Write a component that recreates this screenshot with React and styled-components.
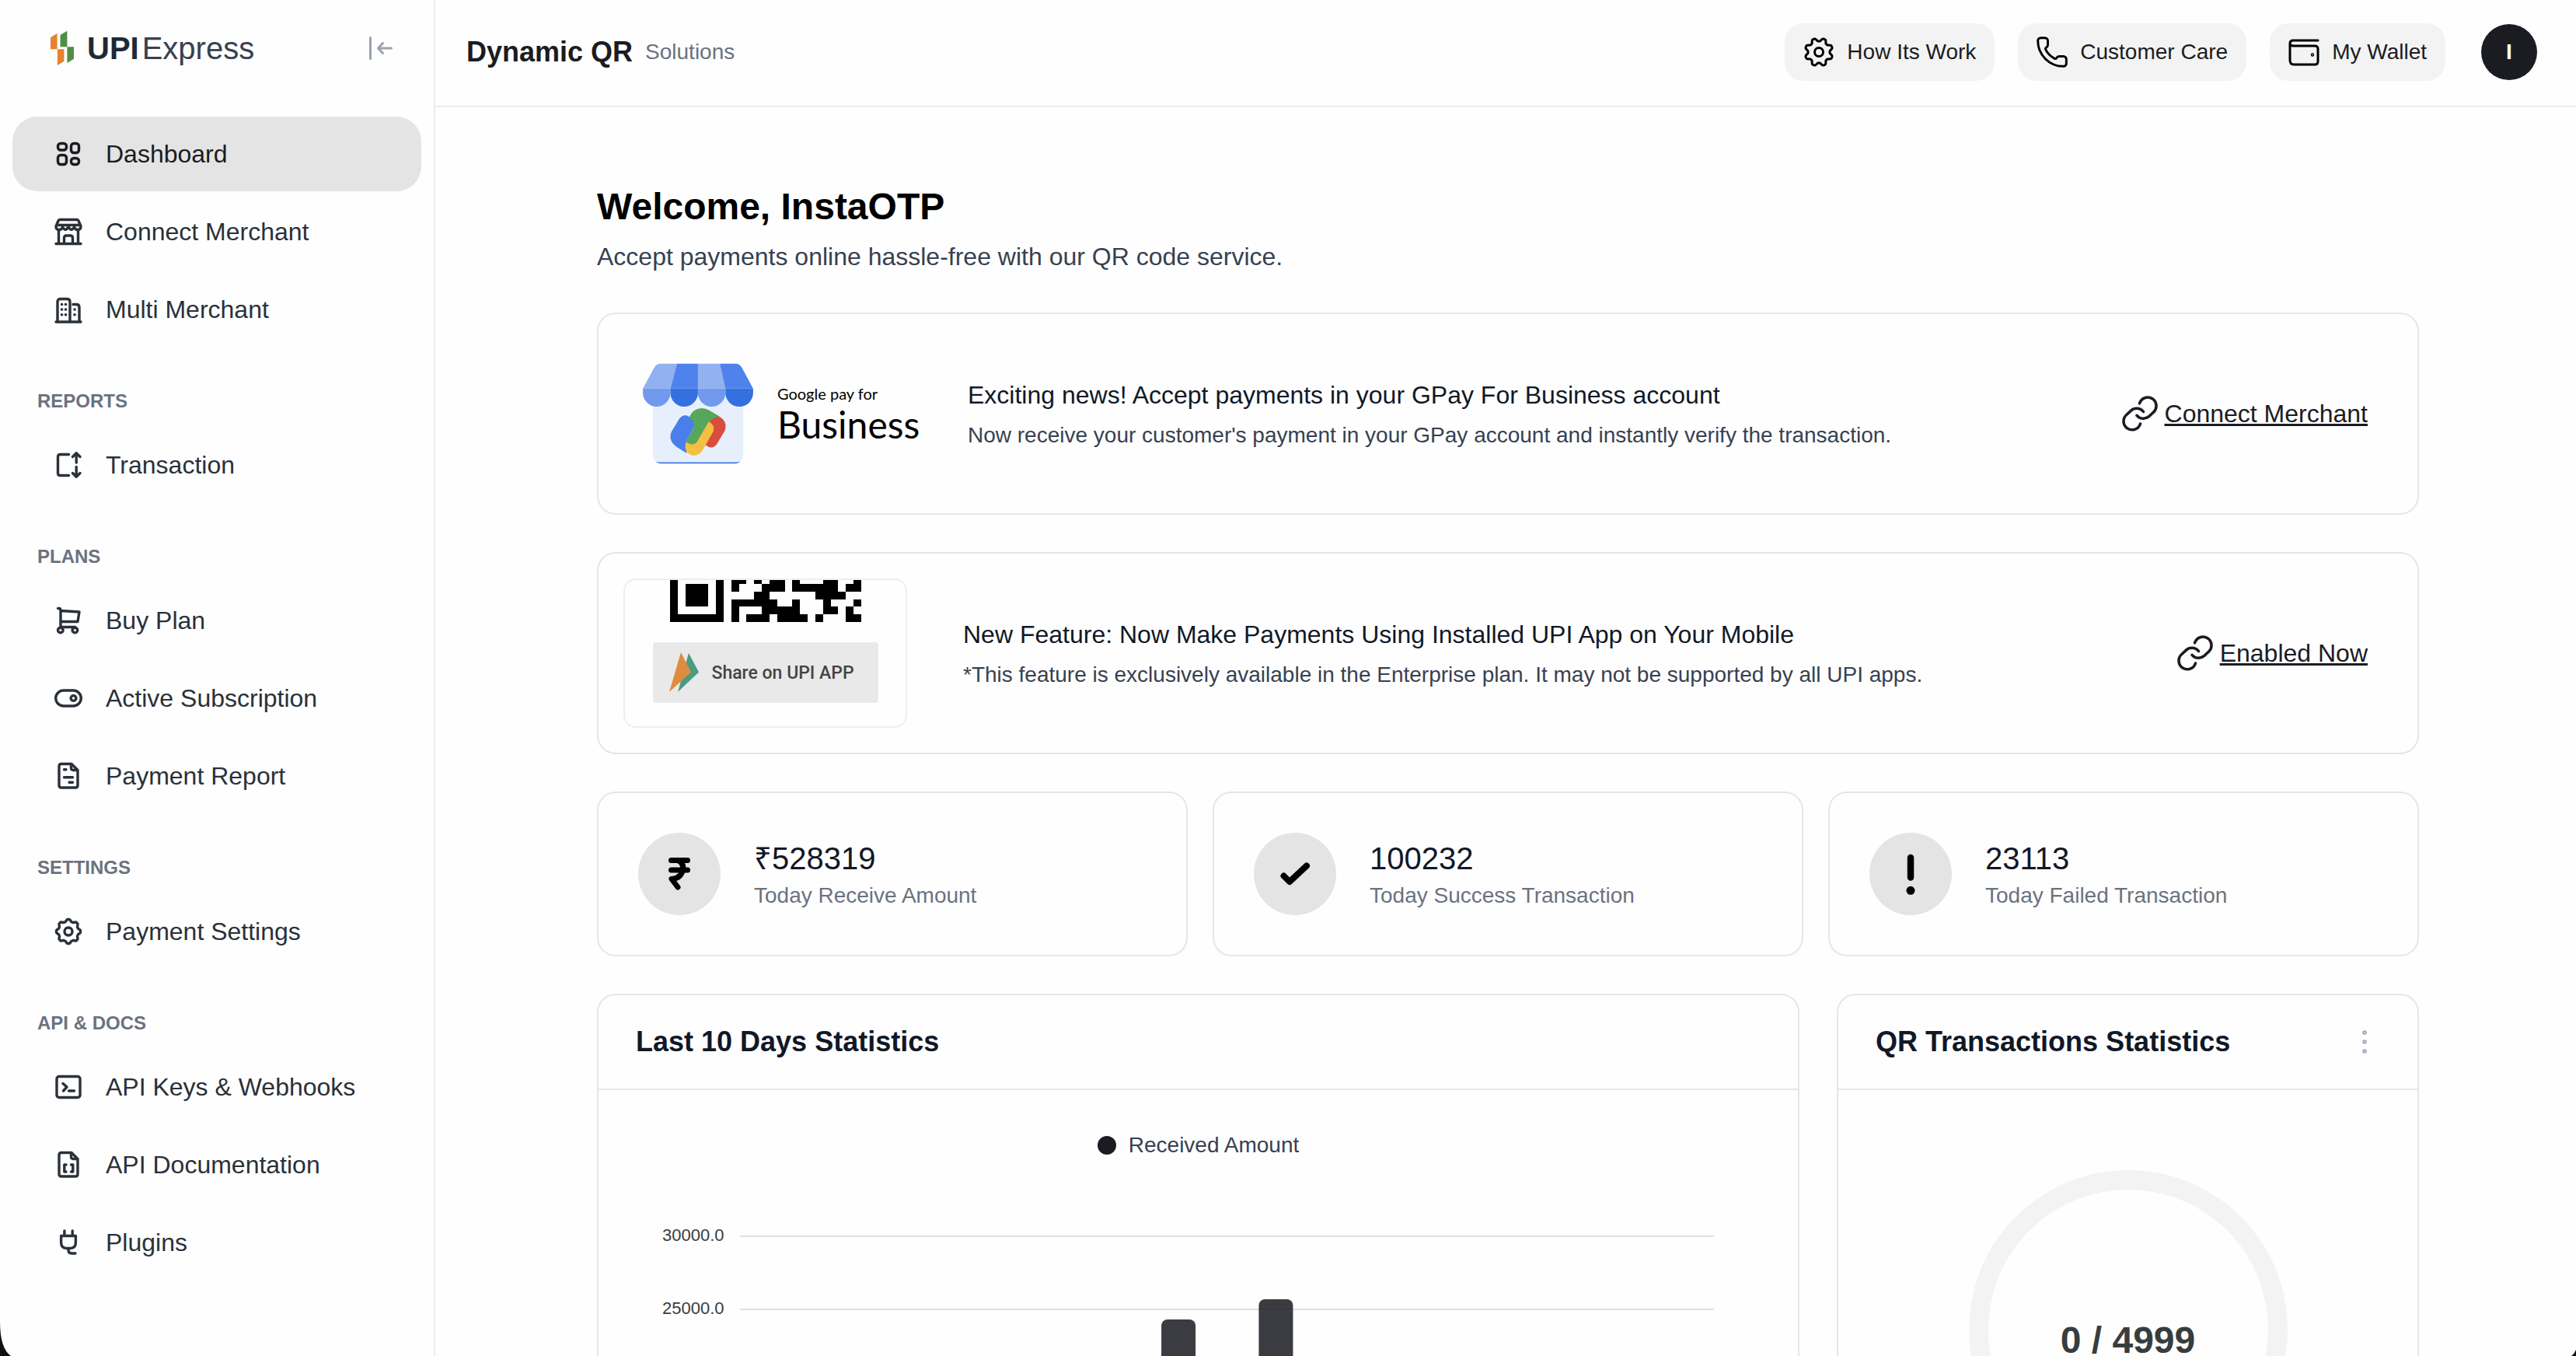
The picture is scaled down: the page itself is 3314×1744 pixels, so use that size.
import styled, { createGlobalStyle, css } from "styled-components"
import { Phone } from "lucide-react"

const GlobalStyle = createGlobalStyle`
  *, *::before, *::after {
    box-sizing: border-box;
  }
  body {
    margin: 0;
    background: #fefefe;
    font-family: "Liberation Sans", Arial, Helvetica, sans-serif;
    color: #111827;
  }
  h1, h2, h3, p {
    margin: 0;
  }
  a {
    color: inherit;
    text-decoration: none;
  }
  button {
    font-family: inherit;
    border: none;
    cursor: pointer;
  }
  svg {
    display: block;
    flex-shrink: 0;
  }
`

/* ---------- layout ---------- */
const Page = styled.div`
  display: flex;
  height: 100vh;
  overflow: hidden;
`
const Sidebar = styled.aside`
  width: 560px;
  flex-shrink: 0;
  border-right: 2px solid #ebecf1;
  padding: 0 16px;
`
const Content = styled.div`
  flex: 1;
  min-width: 0;
  display: flex;
  flex-direction: column;
`
const Main = styled.main`
  flex: 1;
  min-height: 0;
  overflow: hidden;
  padding: 98px 202px 0 208px;
`

/* ---------- sidebar ---------- */
const Brand = styled.div`
  display: flex;
  align-items: center;
  justify-content: space-between;
  height: 124px;
  padding: 0 36px 0 48px;
  margin-bottom: 26px;
`
const BrandLink = styled.a`
  display: flex;
  align-items: center;
  font-size: 40px;
  line-height: 48px;
  color: #374151;
`
const BrandStrong = styled.strong`
  margin: 0 4px 0 16px;
  color: #1f2937;
`
const CollapseButton = styled.button`
  padding: 0;
  background: none;
  color: #9ca3af;
`
const NavList = styled.nav`
  display: flex;
  flex-direction: column;
  gap: 4px;
`
const NavHeading = styled.h3`
  padding: 50px 32px 14px;
  font-size: 24px;
  line-height: 32px;
  color: #6b7280;
`
const NavItem = styled.a`
  display: flex;
  align-items: center;
  gap: 30px;
  height: 96px;
  padding: 0 54px;
  border-radius: 32px;
  font-size: 32px;
  color: #2a3139;
  ${({ $active }) => $active && css`
    background: #e4e4e4;
    color: #1b1c22;
  `}
`

/* ---------- header ---------- */
const Header = styled.header`
  display: flex;
  align-items: center;
  justify-content: space-between;
  padding: 30px 50px 32px 40px;
  border-bottom: 2px solid #ebecf1;
`
const HeaderTitle = styled.div`
  display: flex;
  align-items: center;
  gap: 16px;
`
const Product = styled.h2`
  font-size: 36px;
  color: #1b1c22;
`
const ProductNote = styled.span`
  font-size: 28px;
  color: #6b7280;
`
const HeaderActions = styled.div`
  display: flex;
  align-items: center;
  gap: 30px;
`
const ActionButton = styled.button`
  display: flex;
  align-items: center;
  gap: 14px;
  height: 74px;
  padding: 0 24px 0 22px;
  border-radius: 24px;
  background: #f3f3f3;
  font-size: 28px;
  color: #1b1c22;
  svg {
    color: #000;
  }
`
const Avatar = styled.button`
  width: 72px;
  height: 72px;
  margin-left: 16px;
  padding: 0;
  border-radius: 50%;
  background: #1b1c22;
  color: #fff;
  font-size: 28px;
  font-weight: 700;
`

/* ---------- dashboard ---------- */
const Welcome = styled.h1`
  font-size: 48px;
  line-height: 60px;
  color: #000;
`
const Lead = styled.p`
  margin: 14px 0 52px;
  font-size: 32px;
  line-height: 40px;
  color: #374151;
`
const Card = styled.section`
  border: 2px solid #e5e6eb;
  border-radius: 24px;
  background: #fefefe;
`
const Promo = styled(Card)`
  display: flex;
  align-items: center;
  gap: 72px;
  height: 260px;
  margin-bottom: 48px;
  padding: 0 64px 0 32px;
`
const PromoText = styled.div`
  flex: 1;
  display: flex;
  flex-direction: column;
  gap: 8px;
`
const PromoTitle = styled.h3`
  font-size: 32px;
  font-weight: 400;
  line-height: 48px;
`
const PromoNote = styled.p`
  font-size: 28px;
  line-height: 40px;
  color: #374151;
`
const PromoLink = styled.a`
  display: flex;
  align-items: center;
  gap: 6px;
  font-size: 32px;
  color: #1b1c22;
  span {
    text-decoration: underline;
    text-decoration-thickness: 3px;
    text-underline-offset: 2px;
    text-decoration-skip-ink: none;
  }
`
const GpayBrand = styled.div`
  display: flex;
  align-items: center;
  gap: 30px;
  width: 371px;
  padding-left: 24px;
  font-family: Lato, sans-serif;
  color: #000;
`
const GpaySmall = styled.div`
  font-size: 20px;
  line-height: 28px;
`
const GpayLarge = styled.div`
  font-size: 48px;
  line-height: 52px;
`
const Preview = styled.div`
  display: flex;
  flex-direction: column;
  align-items: center;
  width: 365px;
  height: 192px;
  border: 2px solid #eee;
  border-radius: 16px;
  overflow: hidden;
`
const ShareBar = styled.div`
  display: flex;
  align-items: center;
  gap: 16px;
  width: 290px;
  height: 78px;
  margin-top: 26px;
  padding-left: 20px;
  border-radius: 4px;
  background: #e9e9e9;
  font-family: Roboto, sans-serif;
  font-size: 23px;
  font-weight: 500;
  color: #444;
`
const StatGrid = styled.div`
  display: grid;
  grid-template-columns: repeat(3, 1fr);
  gap: 32px;
  margin-bottom: 48px;
`
const Stat = styled(Card)`
  display: flex;
  align-items: center;
  gap: 43px;
  height: 212px;
  padding: 0 51px;
`
const StatIcon = styled.div`
  display: flex;
  align-items: center;
  justify-content: center;
  width: 106px;
  height: 106px;
  border-radius: 50%;
  background: #e4e4e4;
`
const StatText = styled.div`
  display: flex;
  flex-direction: column;
  gap: 8px;
`
const StatValue = styled.div`
  font-size: 40px;
  line-height: 48px;
`
const StatLabel = styled.div`
  font-size: 28px;
  line-height: 32px;
  color: #6b7280;
`
const PanelGrid = styled.div`
  display: grid;
  grid-template-columns: 66% 1fr;
  gap: 48px;
`
const PanelHead = styled.div`
  display: flex;
  align-items: center;
  justify-content: space-between;
  height: 122px;
  padding: 0 46px 0 48px;
  border-bottom: 2px solid #e5e6eb;
`
const PanelTitle = styled.h2`
  font-size: 36px;
`
const MenuButton = styled.button`
  padding: 0;
  background: none;
  color: #a3a8b4;
`
const Legend = styled.div`
  display: flex;
  align-items: center;
  justify-content: center;
  gap: 16px;
  padding-top: 50px;
  font-size: 28px;
  line-height: 42px;
  color: #374151;
`
const LegendDot = styled.span`
  width: 24px;
  height: 24px;
  border-radius: 50%;
  background: #1b1c22;
`
const Chart = styled.div`
  display: flex;
  gap: 20px;
  margin-top: 48px;
  padding: 0 108px 0 82px;
`
const Axis = styled.div`
  font-size: 22px;
  line-height: 94px;
  text-align: right;
  color: #373d3f;
`
const Plot = styled.svg`
  flex: 1;
  min-width: 0;
  height: 240px;
`
const Gauge = styled.div`
  display: flex;
  align-items: center;
  justify-content: center;
  width: 410px;
  height: 410px;
  margin: 103px auto 0;
  border: 25px solid #f3f3f3;
  border-radius: 50%;
  font-size: 48px;
  font-weight: 700;
  line-height: 36px;
  padding-top: 28px;
  color: #373d3f;
`
const Corner = styled.svg`
  position: fixed;
  bottom: 0;
  ${({ $side }) => $side}: 0;
`

/* ---------- icons ---------- */
const cogPath = (c, mid, amp, turn) => {
  const points = []
  for (let deg = 0; deg < 360; deg += 3) {
    const wave = Math.max(-1, Math.min(1, 1.4 * Math.cos((8 * (deg - turn) * Math.PI) / 180)))
    const r = mid + amp * wave
    const a = ((deg - 90) * Math.PI) / 180
    points.push(`${(c + r * Math.cos(a)).toFixed(2)} ${(c + r * Math.sin(a)).toFixed(2)}`)
  }
  return `M${points.join("L")}Z`
}

const LineIcon = ({ size = 36, stroke = 3.4, children }) => (
  <svg width={size} height={size} viewBox={`0 0 ${size} ${size}`} fill="none" stroke="currentColor"
    strokeWidth={stroke} strokeLinecap="round" strokeLinejoin="round" aria-hidden="true">
    {children}
  </svg>
)

const icons = {
  dashboard: <>
    <rect x="4.5" y="4.5" width="11" height="8.5" rx="3.5" />
    <rect x="21.5" y="4.5" width="10" height="12" rx="3.5" />
    <rect x="4.5" y="19.5" width="11" height="12" rx="3.5" />
    <rect x="21.5" y="23.5" width="10" height="8" rx="3.5" />
  </>,
  store: <>
    <path d="M7 2.500H29Q30.500 2.500 31 4L34 11Q34 15.500 30 15.500Q26.500 15.500 25.500 12Q22 18.500 18 12Q14 18.500 10.500 12Q9.500 15.500 6 15.500Q2 15.500 2 11L5 4Q5.500 2.500 7 2.500Z" />
    <path d="M3.500 9.500H32.500M5.500 16V33M30.500 16V33M2 33.500H34M12.500 33V26Q12.500 23 15.500 23H20.500Q23.500 23 23.500 26V33" />
  </>,
  buildings: <>
    <path d="M2 34H34M4 34V8Q4 4.500 7.500 4.500H16Q20 4.500 20 8V34M24 11.500H28Q32 11.500 32 15V34" />
    <path d="M9.500 11.500H9.600M14.500 11.500H14.600M9.500 18H9.600M14.500 18H14.600M9.500 24.700H9.600M14.500 24.700H14.600M26 18H26.100M26 24.700H26.100" strokeWidth="3.600" />
  </>,
  transfer: <>
    <path d="M18.500 4.500H7.500Q4.500 4.500 4.500 7.500V28.500Q4.500 31.500 7.500 31.500H18.500" />
    <path d="M28.200 15V3M23.500 7.500L28.200 2.800L33 7.500M28.200 20.500V33M23.500 28.500L28.200 33.200L33 28.500" />
  </>,
  cart: <>
    <path d="M4.500 2.500H6Q8 2.500 8 5V26.500H26.500M8 5.500L32 7L30 19.500H8" />
    <circle cx="7.800" cy="30.500" r="3.300" />
    <circle cx="26.400" cy="30.500" r="3.300" />
  </>,
  toggle: <>
    <rect x="1.700" y="8" width="32.600" height="20" rx="10" />
    <circle cx="24.500" cy="18" r="3.400" />
  </>,
  report: <>
    <path d="M22 2.500H9Q6 2.500 6 5.500V30Q6 33 9 33H27Q30 33 30 30V10.500ZM21.500 3V8Q21.500 10.500 24 10.500H29.500" />
    <path d="M12.500 9.700H15M12.500 19.700H23.500M19 26.300H23.500" />
  </>,
  cog: <>
    <path d={cogPath(18, 14.2, 1.3, 0)} />
    <circle cx="18" cy="18" r="5" />
  </>,
  terminal: <>
    <rect x="3" y="4.500" width="30" height="27" rx="3" />
    <path d="M11 13.500L16 18L11.500 23M18.500 23H25.500" />
  </>,
  docs: <>
    <path d="M22 2.500H9Q6 2.500 6 5.500V30Q6 33 9 33H27Q30 33 30 30V10.500ZM21.500 3V8Q21.500 10.500 24 10.500H29.500" />
    <path d="M15 18H12.800V27H15M21.500 18H23.800V27H21.500" />
  </>,
  plug: <path d="M12.900 3V9M23.200 3V9M8.600 9.500H27.400V18Q27.400 25.500 20 25.500H16Q8.600 25.500 8.600 18ZM18 25.500V28Q18 32 22 32H27" />,
}

const Logo = () => (
  <svg width="32" height="46" viewBox="0 0 32 46" aria-hidden="true">
    <path fill="#e5832f" d="M1 9.300L9.600 3.700V24.300H1ZM9.900 24.300H18.500V39.700L9.900 45Z" />
    <path fill="#4f8e45" d="M13.500 6L22.400 .7V21.300H13.500ZM22.400 21.300H31V36.700L22.400 42Z" />
  </svg>
)

const LinkIcon = () => (
  <svg width="50" height="50" viewBox="0 0 50 50" fill="none" stroke="currentColor" strokeWidth="3.600" strokeLinecap="round" aria-hidden="true">
    <path d="M23.500 11.800A11 11 0 1 1 41.300 23.300L35.500 28.700A11 11 0 0 1 20 27.300" />
    <path d="M24.500 38A11 11 0 1 1 6.700 26.500L12.500 21.100A11 11 0 0 1 28.500 22.500" />
  </svg>
)

const StoreArt = () => (
  <svg width="144" height="130" viewBox="0 0 144 130" aria-hidden="true">
    <rect x="15.500" y="90" width="113" height="39.300" rx="9" fill="#3f78e6" />
    <path fill="#e8effc" d="M14 40H130V120Q129 127.500 121 127.500H23Q15 127.500 14 120Z" />
    <path fill="#92b1f1" d="M1.100 32.700L15.500 6Q18.500 .7 24 .7H45L36.500 32.700ZM71.900 .7H100L107.200 32.700H71.900Z" />
    <path fill="#4f82ec" d="M45 .7H71.900V32.700H36.500ZM100 .7H120Q125.500 .7 128.500 6L142.900 32.700H107.200Z" />
    <path fill="#719aee" d="M1.100 32.700H36.500V38.300A17.700 17.700 0 0 1 1.100 38.300ZM71.900 32.700H107.300V38.300A17.700 17.700 0 0 1 71.900 38.300Z" />
    <path fill="#3570e0" d="M36.500 32.700H71.900V38.300A17.700 17.700 0 0 1 36.500 38.300ZM107.300 32.700H142.900V38.300A17.700 17.700 0 0 1 107.300 38.300Z" />
    <path fill="#4a7fea" d="M47 73Q51 66 58 67.500L63 70.500Q69.500 76 66.500 83L56.500 102L57.500 116L44 107.500Q33 99 38 88Z" />
    <path fill="#d84e3d" d="M86 75.500Q91 67 99 68.500Q110.500 75 106.500 87L96 104.500Q92 110 86 108L81.500 105.300L91.500 87Z" />
    <path fill="#57a75b" d="M56.500 102L66.500 83Q69 75 60.500 69.500Q66 58 77 58Q82 58 87 61L100 68.700Q91 69 86.300 76.500L71.500 101Q68 107 62 104.500Z" />
    <path fill="#f4c042" d="M56.500 102Q62 104.500 64 104.500Q69 104.500 71.500 100L85.800 75.300Q94.500 80 91.500 88L77 113.500Q71 120 64 118.500Q53 114.500 56.500 102Z" />
  </svg>
)

// visible part of the code, each run is [first column, length]
const qrRows = [
  [[0, 1], [6, 1], [8, 2], [11, 1], [13, 2], [16, 1], [20, 2], [24, 1]],
  [[0, 1], [2, 3], [6, 1], [8, 1], [12, 3], [16, 6], [23, 2]],
  [[0, 1], [2, 3], [6, 1], [11, 2], [19, 4]],
  [[0, 1], [2, 3], [6, 1], [8, 6], [16, 1], [20, 1], [24, 1]],
  [[0, 1], [6, 1], [8, 1], [12, 5], [20, 2], [23, 1]],
  [[0, 7], [8, 1], [10, 3], [14, 4], [19, 1], [23, 2]],
]

const QrCode = () => (
  <svg width="246" height="54" viewBox="0 0.500 25 5.500" preserveAspectRatio="none" shapeRendering="crispEdges" aria-hidden="true">
    {qrRows.map((row, y) => row.map(([x, w]) => <rect key={`${x}-${y}`} x={x} y={y} width={w} height="1" />))}
  </svg>
)

const menu = [
  { items: [["Dashboard", "dashboard"], ["Connect Merchant", "store"], ["Multi Merchant", "buildings"]] },
  { title: "REPORTS", items: [["Transaction", "transfer"]] },
  { title: "PLANS", items: [["Buy Plan", "cart"], ["Active Subscription", "toggle"], ["Payment Report", "report"]] },
  { title: "SETTINGS", items: [["Payment Settings", "cog"]] },
  { title: "API & DOCS", items: [["API Keys & Webhooks", "terminal"], ["API Documentation", "docs"], ["Plugins", "plug"]] },
]

const stats = [
  {
    value: "₹528319",
    label: "Today Receive Amount",
    icon: <path d="M11.500 4.500H32.500M11.500 17H32.500M20 4.500Q28 8 26.500 16.500Q24 28 12 28.500L20 39" strokeWidth="7" />,
  },
  {
    value: "100232",
    label: "Today Success Transaction",
    icon: <path d="M7.500 24.500L15 32L37 11.500" strokeWidth="8" />,
  },
  {
    value: "23113",
    label: "Today Failed Transaction",
    icon: <><path d="M22 1V26.500" strokeWidth="8.500" /><circle cx="22" cy="43.300" r="5.500" fill="#000" stroke="none" /></>,
  },
]

const ticks = ["30000.0", "25000.0"]
const bars = [{ slot: 4, top: 155 }, { slot: 5, top: 129 }]

const App = () => {
  return (
    <Page>
      <GlobalStyle />
      <Sidebar>
        <Brand>
          <BrandLink href="#">
            <Logo />
            <BrandStrong>UPI</BrandStrong>Express
          </BrandLink>
          <CollapseButton aria-label="Collapse sidebar">
            <svg width="32" height="32" viewBox="0 0 32 32" fill="none" stroke="currentColor" strokeWidth="3" strokeLinecap="round" strokeLinejoin="round">
              <path d="M2.500 2.500V29.500M29.500 16H12.500M18.500 9.500L12.500 16L18.500 22.500" />
            </svg>
          </CollapseButton>
        </Brand>
        <NavList>
          {menu.map(({ title, items }) => (
            <NavList as="div" key={title || "top"}>
              {title && <NavHeading>{title}</NavHeading>}
              {items.map(([name, icon]) => (
                <NavItem key={name} href="#" $active={name === "Dashboard"}>
                  <LineIcon>{icons[icon]}</LineIcon>
                  {name}
                </NavItem>
              ))}
            </NavList>
          ))}
        </NavList>
      </Sidebar>

      <Content>
        <Header>
          <HeaderTitle>
            <Product>Dynamic QR</Product>
            <ProductNote>Solutions</ProductNote>
          </HeaderTitle>
          <HeaderActions>
            <ActionButton>
              <LineIcon size={44} stroke={3}>
                <path d={cogPath(22, 16, 2, 22.5)} />
                <circle cx="22" cy="22" r="5.500" />
              </LineIcon>
              How Its Work
            </ActionButton>
            <ActionButton>
              <Phone size={44} strokeWidth={1.6} />
              Customer Care
            </ActionButton>
            <ActionButton>
              <LineIcon size={44} stroke={3}>
                <path d="M40 7H8Q4 7 4 11V32Q4 38 9 38H36Q40 38 40 34V18Q40 14 36 14H8Q4 14 4 10.500" />
                <circle cx="33" cy="25.500" r="0.700" />
              </LineIcon>
              My Wallet
            </ActionButton>
            <Avatar>I</Avatar>
          </HeaderActions>
        </Header>

        <Main>
          <Welcome>Welcome, InstaOTP</Welcome>
          <Lead>Accept payments online hassle-free with our QR code service.</Lead>

          <Promo>
            <GpayBrand>
              <StoreArt />
              <div>
                <GpaySmall>Google pay for</GpaySmall>
                <GpayLarge>Business</GpayLarge>
              </div>
            </GpayBrand>
            <PromoText>
              <PromoTitle>Exciting news! Accept payments in your GPay For Business account</PromoTitle>
              <PromoNote>Now receive your customer's payment in your GPay account and instantly verify the transaction.</PromoNote>
            </PromoText>
            <PromoLink href="#"><LinkIcon /><span>Connect Merchant</span></PromoLink>
          </Promo>

          <Promo>
            <Preview>
              <QrCode />
              <ShareBar>
                <svg width="40" height="52" viewBox="0 0 40 52" aria-hidden="true">
                  <path fill="#4a9c7f" d="M26 1L39 25.500L12 51Z" />
                  <path fill="#dd8c40" d="M16 0L29 25.500L1 51Z" />
                </svg>
                Share on UPI APP
              </ShareBar>
            </Preview>
            <PromoText>
              <PromoTitle>New Feature: Now Make Payments Using Installed UPI App on Your Mobile</PromoTitle>
              <PromoNote>*This feature is exclusively available in the Enterprise plan. It may not be supported by all UPI apps.</PromoNote>
            </PromoText>
            <PromoLink href="#"><LinkIcon /><span>Enabled Now</span></PromoLink>
          </Promo>

          <StatGrid>
            {stats.map(({ value, label, icon }) => (
              <Stat key={label}>
                <StatIcon>
                  <svg width="56" height="56" viewBox="-6 -6 56 56" fill="none" stroke="#000" strokeLinecap="round" strokeLinejoin="round" aria-hidden="true">
                    {icon}
                  </svg>
                </StatIcon>
                <StatText>
                  <StatValue>{value}</StatValue>
                  <StatLabel>{label}</StatLabel>
                </StatText>
              </Stat>
            ))}
          </StatGrid>

          <PanelGrid>
            <Card>
              <PanelHead>
                <PanelTitle>Last 10 Days Statistics</PanelTitle>
              </PanelHead>
              <Legend><LegendDot />Received Amount</Legend>
              <Chart>
                <Axis>
                  {ticks.map((tick) => <div key={tick}>{tick}</div>)}
                </Axis>
                <Plot aria-hidden="true">
                  {ticks.map((tick, i) => (
                    <line key={tick} x1="0" x2="100%" y1={48 + i * 94} y2={48 + i * 94} stroke="#e0e0e0" strokeWidth="2" />
                  ))}
                  {bars.map(({ slot, top }) => (
                    <svg key={slot} x={`${slot * 10 + 5}%`} overflow="visible">
                      <rect x="-22" y={top} width="44" height="200" rx="8" fill="#1b1c22" fillOpacity="0.860" />
                    </svg>
                  ))}
                </Plot>
              </Chart>
            </Card>
            <Card>
              <PanelHead>
                <PanelTitle>QR Transactions Statistics</PanelTitle>
                <MenuButton aria-label="More options">
                  <svg width="44" height="44" viewBox="0 0 44 44" fill="none" stroke="currentColor" strokeWidth="2">
                    <circle cx="22" cy="10" r="1.800" />
                    <circle cx="22" cy="22" r="1.800" />
                    <circle cx="22" cy="34" r="1.800" />
                  </svg>
                </MenuButton>
              </PanelHead>
              <Gauge>0 / 4999</Gauge>
            </Card>
          </PanelGrid>
        </Main>
      </Content>

      <Corner $side="left" width="14" height="44" viewBox="0 0 14 44" aria-hidden="true">
        <path d="M0 0Q0 34 14 44H0Z" fill="#111" />
      </Corner>
      <Corner $side="right" width="6" height="8" viewBox="0 0 6 8" aria-hidden="true">
        <path d="M6 0Q4 5 0 8H6Z" fill="#111" />
      </Corner>
    </Page>
  )
}

export default App
